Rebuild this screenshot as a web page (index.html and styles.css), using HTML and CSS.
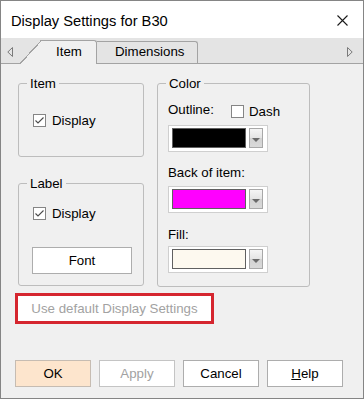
FILE: index.html
```html
<!DOCTYPE html>
<html lang="en">
<head>
    <meta charset="UTF-8">
    <meta name="viewport" content="width=device-width, initial-scale=1.0">
    <title>Display Settings for B30</title>
    <link rel="stylesheet" href="styles.css">
</head>
<body>
    <div class="window">
        <!-- Title bar -->
        <div class="titlebar">
            <span class="title">Display Settings for B30</span>
            <svg class="close-icon" viewBox="0 0 11 11" width="11" height="11">
                <path d="M0.5 0.5L10.5 10.5M10.5 0.5L0.5 10.5" stroke="#1a1a1a" stroke-width="1.1"/>
            </svg>
        </div>

        <!-- Tabs -->
        <div class="tabstrip">
            <svg class="scroll-arrow" viewBox="0 0 6 10" width="6" height="10">
                <path d="M5.5 0.5L0.8 5L5.5 9.5Z" fill="none" stroke="#7a7a7a" stroke-width="1"/>
            </svg>
            <div class="tab tab-active">Item</div>
            <div class="tab tab-dimensions">Dimensions</div>
            <div class="tab-spacer"></div>
            <svg class="scroll-arrow scroll-right" viewBox="0 0 6 10" width="6" height="10">
                <path d="M0.5 0.5L5.2 5L0.5 9.5Z" fill="none" stroke="#7a7a7a" stroke-width="1"/>
            </svg>
        </div>

        <!-- Panel -->
        <div class="panel">
            <div class="columns">
                <div class="col-left">
                    <div class="group group-item">
                        <div class="group-title">Item</div>
                        <label class="check check-item">
                            <svg class="checkbox" viewBox="0 0 13 13" width="13" height="13">
                                <rect x="0.5" y="0.5" width="12" height="12" fill="#ffffff" stroke="#858585"/>
                                <path d="M2.5 6.5L5 9L10.5 3.5" fill="none" stroke="#4a4a4a" stroke-width="1.1"/>
                            </svg>
                            <span>Display</span>
                        </label>
                    </div>

                    <div class="group group-label">
                        <div class="group-title">Label</div>
                        <label class="check check-label">
                            <svg class="checkbox" viewBox="0 0 13 13" width="13" height="13">
                                <rect x="0.5" y="0.5" width="12" height="12" fill="#ffffff" stroke="#858585"/>
                                <path d="M2.5 6.5L5 9L10.5 3.5" fill="none" stroke="#4a4a4a" stroke-width="1.1"/>
                            </svg>
                            <span>Display</span>
                        </label>
                        <button class="btn btn-font">Font</button>
                    </div>
                </div>

                <div class="group group-color">
                    <div class="group-title">Color</div>
                    <div class="color-body">
                        <div class="outline-row">
                            <span class="outline-label">Outline:</span>
                            <label class="check check-dash">
                                <svg class="checkbox" viewBox="0 0 13 13" width="13" height="13">
                                    <rect x="0.5" y="0.5" width="12" height="12" fill="#ffffff" stroke="#858585"/>
                                </svg>
                                <span>Dash</span>
                            </label>
                        </div>
                        <div class="combo combo-first">
                            <div class="swatch swatch-black"></div>
                            <svg class="combo-btn" viewBox="0 0 14 20" width="14" height="20">
                                <defs>
                                    <linearGradient id="cb1" x1="0" y1="0" x2="0" y2="1">
                                        <stop offset="0" stop-color="#f6f6f6"/>
                                        <stop offset="0.5" stop-color="#e4e4e4"/>
                                        <stop offset="0.5" stop-color="#d2d2d2"/>
                                        <stop offset="1" stop-color="#dadada"/>
                                    </linearGradient>
                                </defs>
                                <rect x="0.5" y="0.5" width="13" height="19" fill="url(#cb1)" stroke="#a8a8a8"/>
                                <path d="M3 10H11L7 14Z" fill="#6a6a6a"/>
                            </svg>
                        </div>

                        <div class="color-label">Back of item:</div>
                        <div class="combo">
                            <div class="swatch swatch-magenta"></div>
                            <svg class="combo-btn" viewBox="0 0 14 20" width="14" height="20">
                                <rect x="0.5" y="0.5" width="13" height="19" fill="url(#cb1)" stroke="#a8a8a8"/>
                                <path d="M3 10H11L7 14Z" fill="#6a6a6a"/>
                            </svg>
                        </div>

                        <div class="color-label color-label-fill">Fill:</div>
                        <div class="combo combo-fill">
                            <div class="swatch swatch-cream"></div>
                            <svg class="combo-btn" viewBox="0 0 14 20" width="14" height="20">
                                <rect x="0.5" y="0.5" width="13" height="19" fill="url(#cb1)" stroke="#a8a8a8"/>
                                <path d="M3 10H11L7 14Z" fill="#6a6a6a"/>
                            </svg>
                        </div>
                    </div>
                </div>
            </div>

            <button class="btn btn-default">Use default Display Settings</button>

            <div class="actions">
                <button class="btn btn-ok">OK</button>
                <button class="btn btn-disabled">Apply</button>
                <button class="btn">Cancel</button>
                <button class="btn"><u>H</u>elp</button>
            </div>
        </div>
    </div>
</body>
</html>
```

FILE: styles.css
```css
/* Reset and Base Styles */
* {
    margin: 0;
    padding: 0;
    box-sizing: border-box;
}

:root {
    --panel: #f0f0f0;
    --strip: #e4e4e4;
    --tab-line: #a3a3a3;
    --group-line: #bdbdbd;
    --btn-line: #adadad;
    --disabled: #a2a2a2;
}

body {
    font-family: "Liberation Sans", Arial, sans-serif;
    font-size: 13.3px;
    color: #000000;
    background: #ffffff;
}

/* Window */
.window {
    width: 364px;
    height: 399px;
    border: 1px solid #858585;
    display: flex;
    flex-direction: column;
    background: var(--panel);
}

.titlebar {
    height: 37px;
    background: #ffffff;
    display: flex;
    align-items: center;
    padding: 2px 15px 0 10px;
}

.title {
    flex: 1;
    font-size: 14.7px;
    line-height: 18px;
}

.close-icon {
    margin-top: -1px;
}

/* Tabs */
.tabstrip {
    height: 26px;
    background: var(--strip);
    border-bottom: 1px solid var(--tab-line);
    display: flex;
    align-items: flex-end;
    padding: 0 10px 0 6px;
}

.scroll-arrow {
    align-self: flex-end;
    margin-bottom: 6px;
    flex-shrink: 0;
}

.tab {
    line-height: 16px;
    white-space: nowrap;
}

.tab-active {
    position: relative;
    margin-left: 29px;
    margin-bottom: -1px;
    width: 55px;
    height: 24px;
    padding: 3px 0 0 14px;
    background: var(--panel);
    border-top: 1px solid var(--tab-line);
    border-right: 1px solid var(--tab-line);
    border-top-right-radius: 3px;
}

.tab-active::before {
    content: "";
    position: absolute;
    left: -22px;
    top: -1px;
    bottom: 0;
    width: 22px;
    background: linear-gradient(to bottom right,
        transparent calc(50% - 0.8px),
        var(--tab-line) calc(50% - 0.8px),
        var(--tab-line) calc(50% + 0.4px),
        var(--panel) calc(50% + 0.4px));
}

.tab-dimensions {
    width: 101px;
    height: 22px;
    padding: 2px 0 0 18px;
    border-top: 1px solid var(--tab-line);
    border-right: 1px solid var(--tab-line);
    border-top-right-radius: 3px;
}

.tab-spacer {
    flex: 1;
}

/* Panel */
.panel {
    flex: 1;
    display: flex;
    flex-direction: column;
}

.columns {
    display: flex;
    gap: 13px;
    margin: 19px 0 0 17px;
}

.col-left {
    width: 126px;
    display: flex;
    flex-direction: column;
    gap: 26px;
}

.group {
    border: 1px solid var(--group-line);
    border-radius: 3px;
}

.group-title {
    width: fit-content;
    margin: -8px 0 0 8px;
    padding: 0 3px;
    line-height: 15px;
    background: var(--panel);
}

.group-item {
    height: 74px;
}

.group-label {
    height: 103px;
}

.group-color {
    width: 153px;
    height: 204px;
}

.color-body {
    padding-left: 10px;
}

/* Checkboxes */
.check {
    display: flex;
    align-items: center;
    gap: 6px;
    line-height: 15px;
}

.checkbox {
    flex-shrink: 0;
}

.check-item {
    margin: 22px 0 0 14px;
}

.check-label {
    margin: 15px 0 0 14px;
}

/* Color group */
.outline-row {
    display: flex;
    height: 16px;
    margin-top: 11px;
}

.outline-label {
    width: 63px;
    line-height: 15px;
}

.check-dash {
    align-items: flex-start;
    gap: 5px;
}

.check-dash .checkbox {
    margin-top: 3px;
}

.check-dash span {
    margin-top: 2px;
}

.color-label {
    line-height: 15px;
    margin-top: 13px;
}

.color-label-fill {
    margin-top: 14px;
}

.combo {
    width: 100px;
    height: 27px;
    margin-top: 6px;
    padding: 2px 4px 0 3px;
    background: #ffffff;
    border: 1px solid #cfcfcf;
    display: flex;
    gap: 3px;
}

.combo-first {
    margin-top: 7px;
}

.combo-fill {
    margin-top: 4px;
}

.swatch {
    width: 74px;
    height: 20px;
    border: 1px solid #606060;
}

.swatch-black {
    background: #000000;
}

.swatch-magenta {
    background: #ff00ff;
}

.swatch-cream {
    background: #fdf9ef;
}

/* Buttons */
.btn {
    font-family: inherit;
    font-size: 13.3px;
    color: #000000;
    background: #ffffff;
    border: 1px solid var(--btn-line);
    height: 27px;
    width: 76px;
}

.btn-font {
    width: 100px;
    margin: 26px 0 0 13px;
}

.btn-default {
    width: 193px;
    height: 25px;
    margin: 9px 0 0 17px;
    border: none;
    outline: 3px solid #d5262f;
    color: var(--disabled);
}

.actions {
    display: flex;
    gap: 8px;
    margin: 39px 0 0 14px;
}

.btn-ok {
    background: #fde5cd;
    border-color: #c6bcb2;
}

.btn-disabled {
    color: var(--disabled);
    border-color: #c4c4c4;
}
```
